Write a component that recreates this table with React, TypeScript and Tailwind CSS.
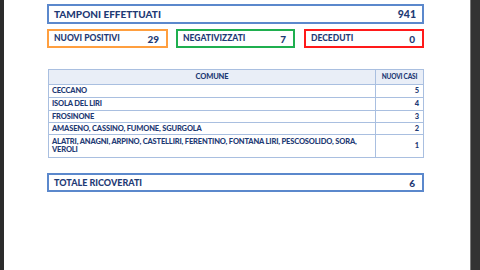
import React from "react";

const rows: [string, string, number][] = [
  ["CECCANO", "5", 13],
  ["ISOLA DEL LIRI", "4", 13],
  ["FROSINONE", "3", 12],
  ["AMASENO, CASSINO, FUMONE, SGURGOLA", "2", 12],
  ["ALATRI, ANAGNI, ARPINO, CASTELLIRI, FERENTINO, FONTANA LIRI, PESCOSOLIDO, SORA, VEROLI", "1", 22],
];

export default function App() {
  return (
    <div className="w-[480px] h-[270px] flex bg-white text-[#1f3b75] font-black" style={{ fontFamily: "Lato, 'Open Sans', sans-serif" }}>
      <div className="w-[4px] bg-[#2b2b2b]" />
      <div className="flex-1 pl-[43px] pt-[4px]">
        <div className="w-[377px] flex flex-col">
          <div className="h-[20px] border-2 border-[#5b88cc] flex items-center justify-between pl-[5px] pr-[6px] text-[10px] leading-none">
            <span>TAMPONI EFFETTUATI</span>
            <span className="text-[10.5px]">941</span>
          </div>
          <div className="mt-[5px] flex h-[19px] text-[8.5px] leading-none">
            <div className="w-[121px] border-2 border-[#ff9f3f] flex items-center justify-between pl-[5px] pr-[7px]">
              <span>NUOVI POSITIVI</span><span className="text-[10px]">29</span>
            </div>
            <div className="ml-[8px] w-[119px] border-2 border-[#1faf4f] flex items-center justify-between pl-[5px] pr-[7px]">
              <span>NEGATIVIZZATI</span><span className="text-[10px]">7</span>
            </div>
            <div className="ml-[9px] w-[120px] border-2 border-[#ff1a1a] flex items-center justify-between pl-[5px] pr-[7px]">
              <span>DECEDUTI</span><span className="text-[10px]">0</span>
            </div>
          </div>
          <div className="mt-[21px] ml-[1px] w-[376px] border border-[#a9bfe0] text-[7.5px] leading-[8px] tracking-[-0.15px]">
            <div className="flex h-[15px] bg-[#e9eef7] border-b border-[#a9bfe0]">
              <div className="flex-1 flex items-center justify-center">COMUNE</div>
              <div className="w-[48px] border-l border-[#a9bfe0] flex items-center justify-center text-[6.5px] tracking-[-0.2px]">NUOVI CASI</div>
            </div>
            {rows.map(([name, n, h], i) => (
              <div key={i} className={"flex " + (i < rows.length - 1 ? "border-b border-[#a9bfe0]" : "")} style={{ height: h }}>
                <div className="flex-1 flex items-center pl-[3px] pr-[4px]">{name}</div>
                <div className="w-[48px] border-l border-[#a9bfe0] flex items-center justify-end pr-[4px]">{n}</div>
              </div>
            ))}
          </div>
          <div className="mt-[15px] h-[19px] border-2 border-[#5b88cc] flex items-center justify-between pl-[5px] pr-[7px] text-[9px] leading-none">
            <span>TOTALE RICOVERATI</span>
            <span className="text-[10px]">6</span>
          </div>
        </div>
      </div>
      <div className="w-[10px] bg-[#333333] border-l border-[#7a7a7a]" />
    </div>
  );
}
